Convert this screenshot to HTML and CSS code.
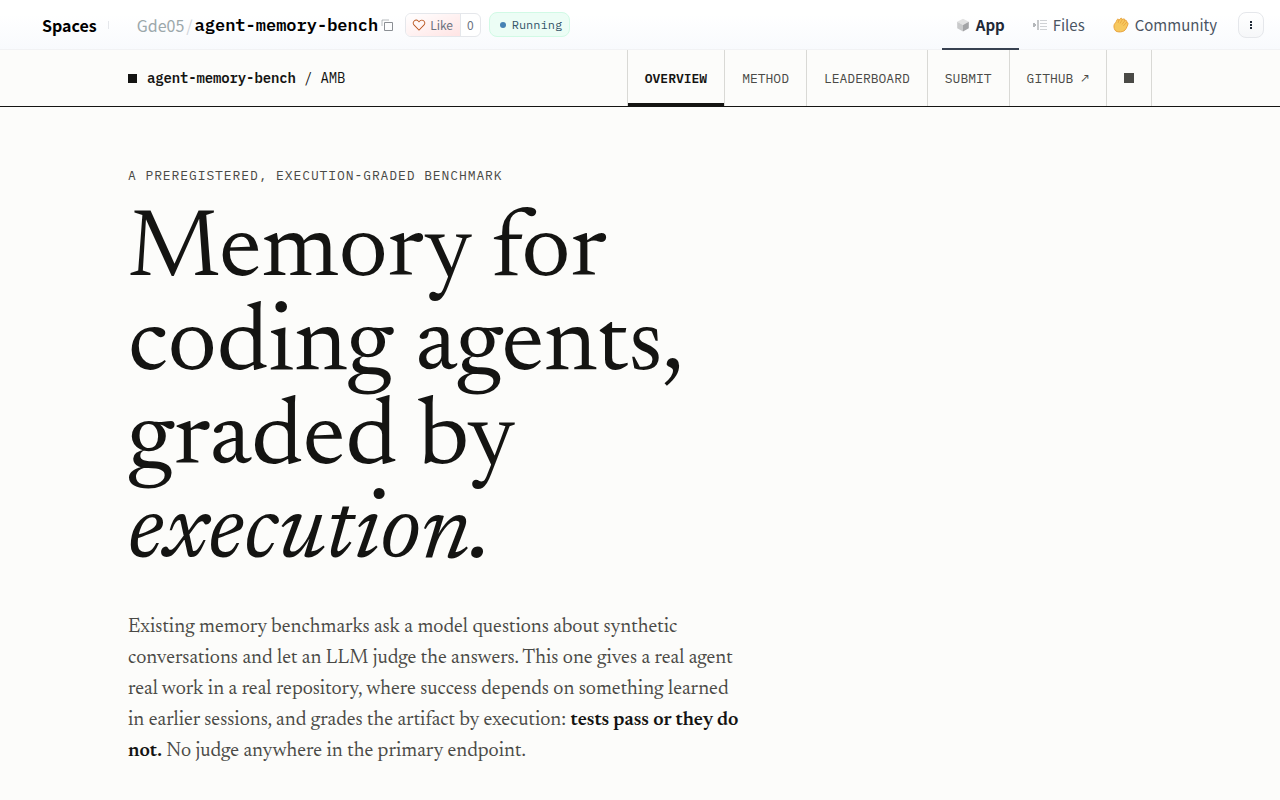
FILE: index.html
```html
<!DOCTYPE html>
<html lang="en">
<head>
    <meta charset="UTF-8">
    <meta name="viewport" content="width=device-width, initial-scale=1.0">
    <title>agent-memory-bench</title>
    <link rel="stylesheet" href="styles.css">
</head>
<body>
    <header class="space-header">
        <a href="#" class="space-home">Spaces</a>
        <span class="space-divider"></span>
        <div class="space-path">
            <a href="#" class="space-owner">Gde05</a>
            <span class="space-slash">/</span>
            <a href="#" class="space-name">agent-memory-bench</a>
            <button type="button" class="copy-button" aria-label="Copy name">
                <svg width="12" height="12" viewBox="0 0 12 12" fill="none" stroke="currentColor">
                    <path d="M3.5 3.5h8v8h-8z"/>
                    <path d="M1 7V1h7" stroke-opacity=".6"/>
                </svg>
            </button>
        </div>
        <div class="like-group">
            <button type="button" class="like-button">
                <svg width="14" height="14" viewBox="0 0 32 32" fill="currentColor">
                    <path d="M22.45 6a5.47 5.47 0 0 1 3.91 1.64 5.7 5.7 0 0 1 0 8L16 26.13 5.64 15.64a5.7 5.7 0 0 1 0-8 5.48 5.48 0 0 1 7.82 0L16 10.24l2.53-2.58A5.44 5.44 0 0 1 22.45 6m0-2a7.47 7.47 0 0 0-5.34 2.24L16 7.36l-1.11-1.12a7.49 7.49 0 0 0-10.68 0 7.72 7.72 0 0 0 0 10.82L16 29l11.79-11.94a7.72 7.72 0 0 0 0-10.82A7.49 7.49 0 0 0 22.45 4Z"/>
                </svg>
                Like
            </button>
            <button type="button" class="like-count">0</button>
        </div>
        <div class="status"><span class="status-dot"></span>Running</div>

        <nav class="space-tabs">
            <a href="#" class="space-tab active">
                <svg width="14" height="14" viewBox="0 0 14 14">
                    <path d="M7 .8 12.8 3.8 7 7 1.2 3.8z" fill="#e2e2e2"/>
                    <path d="M1.2 3.8 7 7v6.4L1.2 10.2z" fill="#c9cacb"/>
                    <path d="M12.8 3.8 7 7v6.4l5.8-3.2z" fill="#a3a4a6"/>
                </svg>
                App
            </a>
            <a href="#" class="space-tab">
                <svg width="14" height="14" viewBox="0 0 14 14">
                    <path d="M0 5h2v1h1v2H2v1H0z" fill="#b3b6b9"/>
                    <path d="M4 2h2v10H4z" fill="#c6c8ca"/>
                    <path d="M7 2.5h7M7 5.5h7M7 8.5h7M7 11.5h7" stroke="#cfd2d5" fill="none"/>
                </svg>
                Files
            </a>
            <a href="#" class="space-tab">
                <svg width="16" height="16" viewBox="0 0 16 16">
                    <path d="M1 8.6C1.2 6.7 2.6 6 3.3 4.5 3.8 3 4.4 1.8 5.3 2.2c.6.2.6.9.5 1.5.7-1.2 1.7-2.6 2.6-2.4.9.1.9 1 .6 1.7.9-1 2-1.4 2.6-.8.5.5.3 1.1 0 1.7.9-.7 1.8-.6 2.1.1.2.5 0 1-.3 1.5.8-.2 1.6.1 1.6.9.1 1.3-.6 2.3-1.1 3.4-.8 2.2-2.2 4.3-4.7 4.8-2.2.5-4.8.5-6.5-.7C1.5 12.8.8 10.6 1 8.6z" fill="#f6c85f" stroke="#e9a23b"/>
                    <path d="M5.8 3.7 5 6M9 3 7 6.5M11.6 3.9 9 7.5M13.4 5.5l-3 3.4" stroke="#e9a23b" stroke-width=".8" fill="none"/>
                </svg>
                Community
            </a>
            <button type="button" class="menu-button" aria-label="More options">
                <svg width="10" height="12" viewBox="0 0 10 12" fill="currentColor">
                    <path d="M4 2h2v2H4zM4 5h2v2H4zM4 8h2v2H4z"/>
                </svg>
            </button>
        </nav>
    </header>

    <div class="site-bar">
        <div class="container site-bar-inner">
            <a href="#" class="brand">
                <span class="square"></span>
                <span><strong>agent-memory-bench</strong> / AMB</span>
            </a>
            <nav class="site-nav">
                <a href="#" class="site-link active">Overview</a>
                <a href="#" class="site-link">Method</a>
                <a href="#" class="site-link">Leaderboard</a>
                <a href="#" class="site-link">Submit</a>
                <a href="#" class="site-link">GitHub ↗</a>
                <button type="button" class="site-link" aria-label="Toggle theme"><span class="square square-muted"></span></button>
            </nav>
        </div>
    </div>

    <main class="container hero">
        <p class="kicker">A preregistered, execution-graded benchmark</p>
        <h1>Memory for coding agents, graded by <em>execution.</em></h1>
        <p class="lede">Existing memory benchmarks ask a model questions about synthetic conversations and let an LLM judge the answers. This one gives a real agent real work in a real repository, where success depends on something learned in earlier sessions, and grades the artifact by execution: <strong>tests pass or they do not.</strong> No judge anywhere in the primary endpoint.</p>
    </main>
</body>
</html>
```
FILE: styles.css
```css
* {
    margin: 0;
    padding: 0;
    box-sizing: border-box;
}

body {
    font-family: "Newsreader", "Liberation Serif", serif;
    background: #fcfcfa;
    color: #141412;
}

a {
    color: inherit;
    text-decoration: none;
}

button {
    font: inherit;
    color: inherit;
    background: none;
    border: none;
    cursor: pointer;
}

svg {
    display: block;
    flex-shrink: 0;
}

/* Space header */
.space-header {
    display: flex;
    align-items: center;
    height: 50px;
    padding: 0 16px 0 42px;
    border-bottom: 1px solid #f1f2f4;
    background: linear-gradient(#ffffff 30%, #f8fafd);
    font-family: "Noto Sans CJK SC", sans-serif;
    font-size: 16px;
    line-height: 24px;
    color: #4b5563;
}

.space-home {
    color: #000;
    font-weight: 700;
}

.space-divider {
    width: 1px;
    height: 8px;
    margin: 0 28px 0 11px;
    background: #e5e7eb;
}

.space-path {
    display: flex;
    align-items: center;
    gap: 2px;
}

.space-owner {
    color: #9ca8ab;
}

.space-slash {
    color: #d1d5db;
}

.space-name {
    font-family: "IBM Plex Mono", "Liberation Mono", monospace;
    font-size: 17px;
    font-weight: 600;
    color: #000;
}

.copy-button {
    margin-left: 1px;
    color: #8b8f94;
}

.like-group {
    display: flex;
    margin-left: 12px;
    border: 1px solid #e5e7eb;
    border-radius: 6px;
    overflow: hidden;
    background: #fff;
    font-size: 12px;
    line-height: 22px;
    color: #6b7280;
}

.like-button {
    display: flex;
    align-items: center;
    gap: 4px;
    padding: 0 7px 0 6px;
    background: linear-gradient(to top left, #ffe4e4, #ffffff);
}

.like-button svg {
    color: #b9541c;
}

.like-count {
    padding: 0 6px;
    border-left: 1px solid #e5e7eb;
}

.status {
    display: flex;
    align-items: center;
    gap: 6px;
    height: 25px;
    margin-left: 8px;
    padding: 0 7px 0 10px;
    border: 1px solid #d1fae5;
    border-radius: 8px;
    background: #ecfdf5;
    font-family: "IBM Plex Mono", "Liberation Mono", monospace;
    font-size: 12px;
    color: #35566b;
}

.status-dot {
    width: 6px;
    height: 6px;
    border-radius: 50%;
    background: #4682b4;
}

.space-tabs {
    display: flex;
    align-items: center;
    align-self: stretch;
    margin-left: auto;
}

.space-tab {
    display: flex;
    align-items: center;
    gap: 6px;
    height: 50px;
    padding: 2px 14px 0;
    border-bottom: 2px solid transparent;
    font-size: 15px;
}

.space-tab.active {
    border-color: #374151;
    color: #1f2937;
    font-weight: 700;
}

.menu-button {
    display: flex;
    align-items: center;
    justify-content: center;
    width: 26px;
    height: 26px;
    margin-left: 7px;
    border: 1px solid #e5e7eb;
    border-radius: 8px;
    background: linear-gradient(#ffffff, #f6f7f9);
    color: #1f2937;
}

/* Site navigation */
.container {
    max-width: 1120px;
    margin: 0 auto;
    padding: 0 48px;
}

.site-bar {
    border-bottom: 1px solid #141412;
    font-family: "IBM Plex Mono", "Liberation Mono", monospace;
}

.site-bar-inner {
    display: flex;
    justify-content: space-between;
    height: 56px;
}

.brand {
    display: flex;
    align-items: center;
    gap: 10px;
    font-size: 14px;
    letter-spacing: -0.01em;
}

.brand strong {
    font-weight: 600;
}

.square {
    display: block;
    width: 9px;
    height: 9px;
    background: #141412;
}

.square-muted {
    width: 10px;
    height: 10px;
    background: #4a4a46;
}

.site-nav {
    display: flex;
    border-left: 1px solid #d9d9d5;
}

.site-link {
    display: flex;
    align-items: center;
    padding: 0 17px;
    border-right: 1px solid #d9d9d5;
    font-size: 13px;
    text-transform: uppercase;
    color: #4a4a46;
}

.site-link.active {
    box-shadow: inset 0 -3px #141412;
    color: #141412;
    font-weight: 600;
}

/* Hero */
.hero {
    padding-top: 60px;
    padding-bottom: 32px;
}

.kicker {
    margin-bottom: 21px;
    font-family: "IBM Plex Mono", "Liberation Mono", monospace;
    font-size: 13px;
    line-height: 18px;
    letter-spacing: 0.07em;
    text-transform: uppercase;
    color: #4a4a46;
}

h1 {
    max-width: 640px;
    margin-bottom: 30px;
    font-size: 97px;
    font-weight: 400;
    line-height: 94px;
}

.lede {
    max-width: 620px;
    font-size: 20px;
    line-height: 31px;
    color: #4a4a46;
}

.lede strong {
    color: #141412;
    font-weight: 600;
}
```
